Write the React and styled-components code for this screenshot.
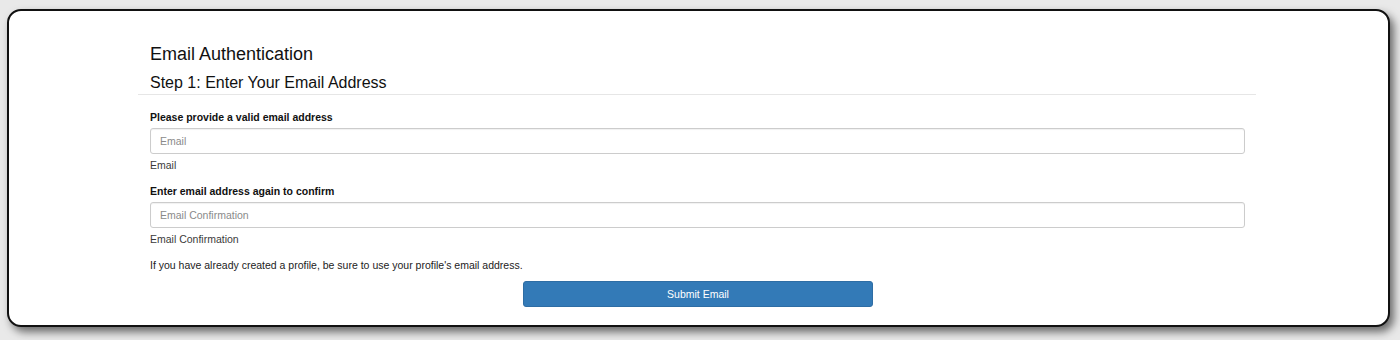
import React from 'react';
import styled, { createGlobalStyle } from 'styled-components';

const GlobalStyle = createGlobalStyle`
  body {
    margin: 0;
    background: #e9e9e9;
    font-family: "Liberation Sans", Arial, sans-serif;
  }
`;

const Page = styled.div`
  padding: 9px 10px 0 7px;
  height: 340px;
  box-sizing: border-box;
`;

const Card = styled.div`
  background: #fff;
  border: 2px solid #111;
  border-radius: 14px;
  box-shadow: 4px 5px 8px rgba(0, 0, 0, 0.55);
  height: 318px;
  box-sizing: border-box;
  display: flex;
  justify-content: center;
  padding-right: 3px;
`;

const Container = styled.div`
  width: 1118px;
  padding-top: 32px;
`;

const Inner = styled.div`
  padding: 0 12px;
`;

const Title = styled.h2`
  margin: 0;
  font-size: 18px;
  font-weight: normal;
  color: #111;
  line-height: 22px;
`;

const Subtitle = styled.h3`
  margin: 8px 0 0;
  font-size: 16px;
  font-weight: normal;
  color: #111;
  line-height: 20px;
`;

const Divider = styled.hr`
  border: 0;
  border-top: 1px solid #e6e6e6;
  margin: 1px 0 0;
`;

const Form = styled.form`
  padding: 16px 12px 0;
  display: flex;
  flex-direction: column;
`;

const Group = styled.div`
  display: flex;
  flex-direction: column;
  margin-bottom: ${(p) => p.$gap || 0}px;
`;

const Label = styled.label`
  font-size: 10.5px;
  font-weight: bold;
  color: #111;
  line-height: 13px;
  margin-bottom: 4px;
`;

const Input = styled.input`
  height: 26px;
  box-sizing: border-box;
  width: 1095px;
  border: 1px solid #ccc;
  border-radius: 3px;
  padding: 0 9px;
  font-family: inherit;
  font-size: 10.5px;
  color: #555;
  box-shadow: inset 0 1px 1px rgba(0, 0, 0, 0.06);

  &::placeholder {
    color: #8a8a8a;
  }
`;

const Help = styled.span`
  font-size: 10.5px;
  color: #3a3a3a;
  line-height: 13px;
  margin-top: 5px;
`;

const Note = styled.p`
  margin: 0;
  font-size: 10.5px;
  color: #222;
  line-height: 13px;
`;

const ButtonRow = styled.div`
  display: flex;
  justify-content: center;
  margin-top: 9px;
  padding-left: 2px;
`;

const SubmitButton = styled.button`
  width: 350px;
  height: 26px;
  background: #337ab7;
  border: 1px solid #2e6da4;
  border-radius: 3px;
  color: #fff;
  font-family: inherit;
  font-size: 10.5px;
  cursor: pointer;
`;

export default function App() {
  return (
    <>
      <GlobalStyle />
      <Page>
        <Card>
          <Container>
            <Inner>
              <Title>Email Authentication</Title>
              <Subtitle>Step 1: Enter Your Email Address</Subtitle>
            </Inner>
            <Divider />
            <Form onSubmit={(e) => e.preventDefault()}>
              <Group $gap={13}>
                <Label htmlFor="email">Please provide a valid email address</Label>
                <Input id="email" type="email" placeholder="Email" />
                <Help>Email</Help>
              </Group>
              <Group $gap={13}>
                <Label htmlFor="email2">Enter email address again to confirm</Label>
                <Input id="email2" type="email" placeholder="Email Confirmation" />
                <Help>Email Confirmation</Help>
              </Group>
              <Note>If you have already created a profile, be sure to use your profile's email address.</Note>
              <ButtonRow>
                <SubmitButton type="submit">Submit Email</SubmitButton>
              </ButtonRow>
            </Form>
          </Container>
        </Card>
      </Page>
    </>
  );
}
